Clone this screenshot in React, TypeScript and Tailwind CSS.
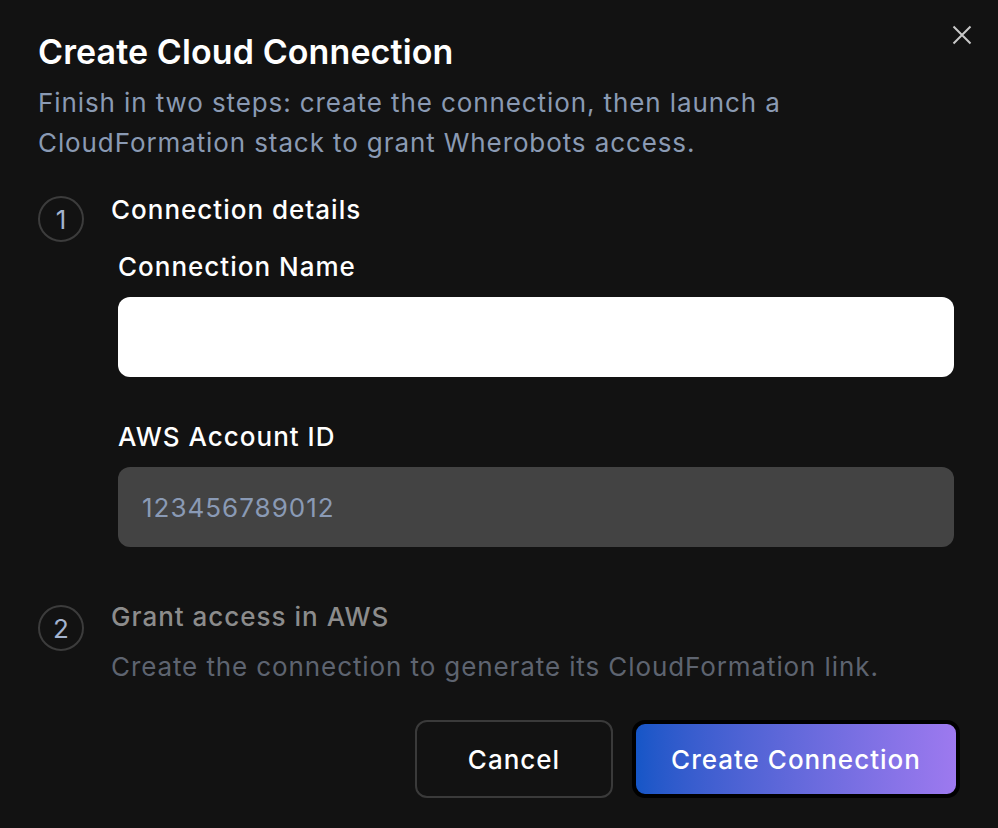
export default function App() {
  return (
    <div
      className="relative h-[828px] w-[998px] bg-[#121212] px-[38px] pt-[34px] text-white"
      style={{ fontFamily: "Inter, 'Noto Sans', sans-serif" }}
    >
      <button className="absolute right-[26px] top-[25px] text-[#c8c8c8]" aria-label="Close">
        <svg width="20" height="20" viewBox="0 0 20 20" fill="none" stroke="currentColor" strokeWidth="2">
          <path d="M1.5 1.5l17 17M18.5 1.5l-17 17" />
        </svg>
      </button>

      <h2 className="text-[34px] font-semibold leading-[36px] tracking-[0.1px]">Create Cloud Connection</h2>
      <p className="mt-[13px] text-[26px] leading-[40px] tracking-[0.9px] text-[#8a9ab3]">
        Finish in two steps: create the connection, then launch a
        <br />
        CloudFormation stack to grant Wherobots access.
      </p>

      <div className="mt-[31px] flex gap-[27px]">
        <div className="mt-[2px] flex h-[46px] w-[46px] shrink-0 items-center justify-center rounded-full border-2 border-[#3c3c3c] text-[26px] text-[#a3b3cf]">
          1
        </div>
        <div className="flex-1">
          <h3 className="text-[26px] font-medium leading-[32px] tracking-[1px]">Connection details</h3>
          <div className="ml-[7px] mr-[6px]">
            <label className="mt-[25px] block text-[26px] font-medium leading-[32px] tracking-[1px]">
              Connection Name
            </label>
            <input className="mt-[14px] block h-[80px] w-full rounded-[12px] bg-white px-6 text-[26px] text-black outline-none" />
            <label className="mt-[44px] block text-[26px] font-medium leading-[32px] tracking-[1px]">
              AWS Account ID
            </label>
            <input
              className="mt-[14px] block h-[80px] w-full rounded-[12px] bg-[#434343] px-6 text-[26px] tracking-[1px] text-[#8a9ab5] placeholder:text-[#8a9ab5] outline-none"
              placeholder="123456789012"
            />
          </div>
        </div>
      </div>

      <div className="mt-[54px] flex gap-[27px]">
        <div className="mt-[4px] flex h-[46px] w-[46px] shrink-0 items-center justify-center rounded-full border-2 border-[#3c3c3c] text-[26px] text-[#a3b3cf]">
          2
        </div>
        <div className="flex-1">
          <h3 className="text-[26px] font-medium leading-[32px] tracking-[1px] text-[#8c8c8c]">Grant access in AWS</h3>
          <p className="mt-[18px] text-[26px] leading-[32px] tracking-[0.9px] text-[#5e6470]">
            Create the connection to generate its CloudFormation link.
          </p>
        </div>
      </div>

      <div className="mt-[37px] flex justify-end gap-[19px]">
        <button className="h-[78px] w-[198px] rounded-[12px] border-2 border-[#3a3a3a] text-[26px] font-medium tracking-[1px]">
          Cancel
        </button>
        <button className="h-[78px] w-[328px] rounded-[13px] border-4 border-black bg-gradient-to-r from-[#1556c7] to-[#9d79ef] text-[26px] font-medium tracking-[1px]">
          Create Connection
        </button>
      </div>
    </div>
  );
}
